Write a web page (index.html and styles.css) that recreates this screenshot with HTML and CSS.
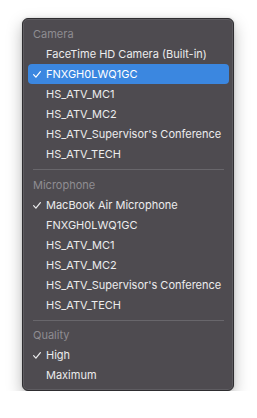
FILE: index.html
```html
<!DOCTYPE html>
<html>
<head>
<meta charset="utf-8">
<link rel="stylesheet" href="styles.css">
</head>
<body>
<div class="menu">
  <div class="header">Camera</div>
  <div class="item">FaceTime HD Camera (Built-in)</div>
  <div class="item selected"><svg class="check" viewBox="0 0 8 7"><path d="M0.6 3.6 L2.9 6.2 L7.4 0.6"/></svg>FNXGH0LWQ1GC</div>
  <div class="item">HS_ATV_MC1</div>
  <div class="item">HS_ATV_MC2</div>
  <div class="item">HS_ATV_Supervisor's Conference</div>
  <div class="item">HS_ATV_TECH</div>
  <div class="sep"></div>
  <div class="header">Microphone</div>
  <div class="item"><svg class="check" viewBox="0 0 8 7"><path d="M0.6 3.6 L2.9 6.2 L7.4 0.6"/></svg>MacBook Air Microphone</div>
  <div class="item">FNXGH0LWQ1GC</div>
  <div class="item">HS_ATV_MC1</div>
  <div class="item">HS_ATV_MC2</div>
  <div class="item">HS_ATV_Supervisor's Conference</div>
  <div class="item">HS_ATV_TECH</div>
  <div class="sep"></div>
  <div class="header">Quality</div>
  <div class="item"><svg class="check" viewBox="0 0 8 7"><path d="M0.6 3.6 L2.9 6.2 L7.4 0.6"/></svg>High</div>
  <div class="item">Maximum</div>
</div>
</body>
</html>
```
FILE: styles.css
```css
html, body {
  margin: 0;
  padding: 0;
  background: #ffffff;
}
body {
  padding: 18px 0 0 22px;
  font-family: Inter, "Liberation Sans", sans-serif;
}
.menu {
  box-sizing: border-box;
  width: 212px;
  height: 373px;
  background: #4e4b50;
  border: 1px solid #2e2d30;
  box-shadow: inset 0 0 0 1px #5e5c61, 0 6px 16px rgba(0,0,0,0.28), 0 0 3px rgba(0,0,0,0.15);
  border-radius: 6px;
  padding: 5px 4px 5px 5px;
  display: flex;
  flex-direction: column;
}
.header, .item {
  height: 20px;
  line-height: 20px;
  font-size: 11px;
  white-space: nowrap;
  position: relative;
  border-radius: 4px;
}
.header {
  color: #8f8d92;
  padding-left: 5px;
}
.item {
  color: #ececed;
  padding-left: 18px;
}
.item.selected {
  background: #3b87e0;
  color: #ffffff;
}
.check {
  position: absolute;
  left: 5px;
  top: 7px;
  width: 8px;
  height: 7px;
  fill: none;
  stroke: currentColor;
  stroke-width: 1.2;
  stroke-linecap: round;
  stroke-linejoin: round;
}
.sep {
  height: 1px;
  background: #68666b;
  margin: 5px 5px 5px 5px;
}
```
